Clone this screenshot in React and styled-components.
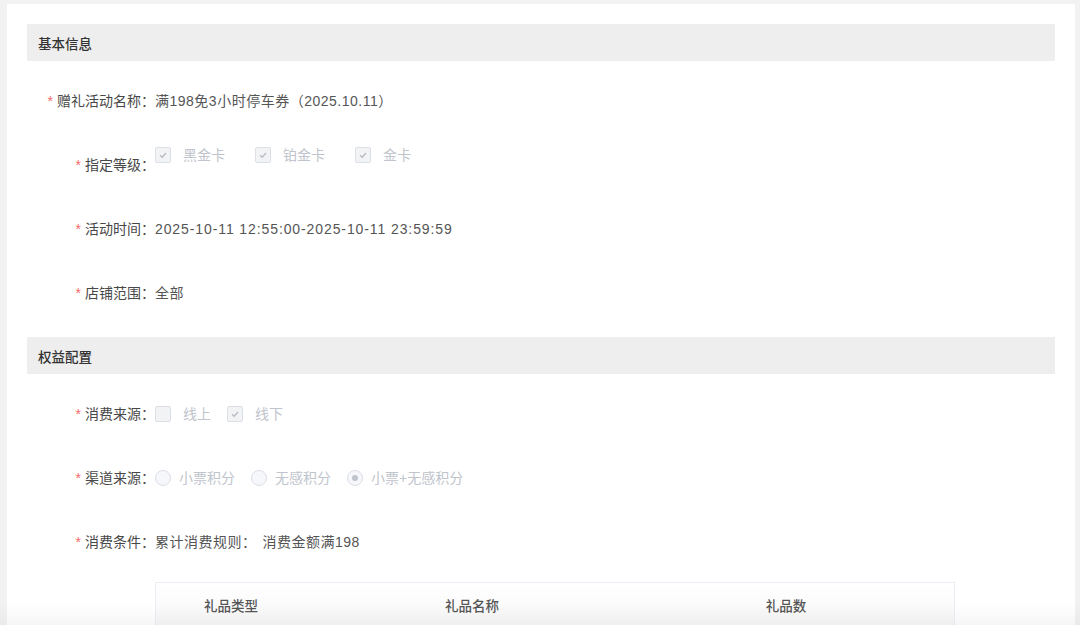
import React from "react";
import styled, { createGlobalStyle } from "styled-components";

const GlobalStyle = createGlobalStyle`
  html, body {
    margin: 0;
    padding: 0;
    background: #f2f2f2;
  }
  body {
    font-family: "Liberation Sans", "Noto Sans CJK SC", sans-serif;
    -webkit-font-smoothing: antialiased;
  }
`;

const Page = styled.div`
  width: 1080px;
  height: 625px;
  overflow: hidden;
  padding: 4px 5px 0 7px;
  box-sizing: border-box;
  position: relative;
`;

const Card = styled.div`
  background: #fff;
  height: 100%;
  padding: 20px 20px 0 20px;
  box-sizing: border-box;
`;

const SectionHeader = styled.div`
  height: 37px;
  background: #eeeeee;
  display: flex;
  align-items: center;
  padding-left: 11px;
  font-size: 13.5px;
  font-weight: 500;
  color: #333;
`;

const Section = styled.div`
  display: flex;
  flex-direction: column;
  gap: 24px;
  padding: ${(p) => p.$pad || "20px 0 24px"};
`;

const Row = styled.div`
  display: flex;
  align-items: ${(p) => (p.$top ? "flex-start" : "center")};
  height: 40px;
`;

const Label = styled.div`
  width: 128px;
  height: 40px;
  flex-shrink: 0;
  text-align: right;
  line-height: 40px;
  font-size: 14px;
  color: #484848;
  white-space: nowrap;
  &::before {
    content: "*";
    color: #f56c6c;
    margin-right: 4px;
  }
`;

const Value = styled.div`
  font-size: 14px;
  line-height: 20px;
  color: #555;
  letter-spacing: ${(p) => p.$ls || "0.5px"};
  white-space: nowrap;
`;

const Group = styled.div`
  display: flex;
  align-items: center;
  height: ${(p) => (p.$top ? "20px" : "40px")};
`;

const Option = styled.label`
  display: flex;
  align-items: center;
  margin-right: ${(p) => p.$gap}px;
  font-size: 14px;
  line-height: 20px;
  color: #c0c4cc;
  white-space: nowrap;
`;

const Box = styled.span`
  width: 14px;
  height: 14px;
  border: 1px solid #dcdfe6;
  border-radius: 2px;
  background: #f2f3f5;
  display: flex;
  align-items: center;
  justify-content: center;
  margin-right: 12px;
  box-sizing: content-box;
`;

const Radio = styled.span`
  width: 14px;
  height: 14px;
  border: 1px solid #dcdfe6;
  border-radius: 50%;
  background: #f5f7fa;
  display: flex;
  align-items: center;
  justify-content: center;
  margin-right: 8px;
  box-sizing: content-box;
  &::after {
    content: "";
    width: 6px;
    height: 6px;
    border-radius: 50%;
    background: ${(p) => (p.$on ? "#c0c4cc" : "transparent")};
  }
`;

const Rule = styled.span`
  margin-right: 6px;
`;

const Table = styled.div`
  width: 800px;
  box-sizing: border-box;
  margin-left: 128px;
  border: 1px solid #ebeef5;
  border-bottom: none;
`;

const HeadRow = styled.div`
  display: grid;
  grid-template-columns: 150px 332px 1fr;
  height: 44px;
  background: linear-gradient(#ffffff, #f7f7f7);
  padding-right: 20px;
`;

const HeadCell = styled.div`
  display: flex;
  align-items: center;
  justify-content: center;
  font-size: 13.5px;
  font-weight: 500;
  color: #555;
`;

const BottomFade = styled.div`
  position: absolute;
  left: 0;
  right: 0;
  bottom: 0;
  height: 22px;
  background: linear-gradient(rgba(0, 0, 0, 0), rgba(0, 0, 0, 0.035));
  pointer-events: none;
`;

const Check = () => (
  <svg width="10" height="10" viewBox="0 0 10 10">
    <polyline points="2,5.2 4.2,7.3 8,3" fill="none" stroke="#b8bcc4" strokeWidth="1.3" />
  </svg>
);

const CheckOption = ({ checked, gap, children }) => (
  <Option $gap={gap}>
    <Box>{checked && <Check />}</Box>
    {children}
  </Option>
);

const RadioOption = ({ on, children }) => (
  <Option $gap={16}>
    <Radio $on={on} />
    {children}
  </Option>
);

export default function App() {
  return (
    <>
      <GlobalStyle />
      <Page>
        <Card>
          <SectionHeader>基本信息</SectionHeader>
          <Section>
            <Row>
              <Label>赠礼活动名称：</Label>
              <Value>满198免3小时停车券（2025.10.11）</Value>
            </Row>
            <Row $top>
              <Label>指定等级：</Label>
              <Group $top>
                <CheckOption checked gap={30}>黑金卡</CheckOption>
                <CheckOption checked gap={30}>铂金卡</CheckOption>
                <CheckOption checked gap={30}>金卡</CheckOption>
              </Group>
            </Row>
            <Row>
              <Label>活动时间：</Label>
              <Value $ls="0.9px">2025-10-11 12:55:00-2025-10-11 23:59:59</Value>
            </Row>
            <Row>
              <Label>店铺范围：</Label>
              <Value>全部</Value>
            </Row>
          </Section>

          <SectionHeader>权益配置</SectionHeader>
          <Section $pad="20px 0 20px">
            <Row>
              <Label>消费来源：</Label>
              <Group>
                <CheckOption gap={16}>线上</CheckOption>
                <CheckOption checked gap={16}>线下</CheckOption>
              </Group>
            </Row>
            <Row>
              <Label>渠道来源：</Label>
              <Group>
                <RadioOption>小票积分</RadioOption>
                <RadioOption>无感积分</RadioOption>
                <RadioOption on>小票+无感积分</RadioOption>
              </Group>
            </Row>
            <Row>
              <Label>消费条件：</Label>
              <Value>
                <Rule>累计消费规则：</Rule>
                消费金额满198
              </Value>
            </Row>
          </Section>

          <Table>
            <HeadRow>
              <HeadCell>礼品类型</HeadCell>
              <HeadCell>礼品名称</HeadCell>
              <HeadCell>礼品数</HeadCell>
            </HeadRow>
          </Table>
        </Card>
        <BottomFade />
      </Page>
    </>
  );
}
